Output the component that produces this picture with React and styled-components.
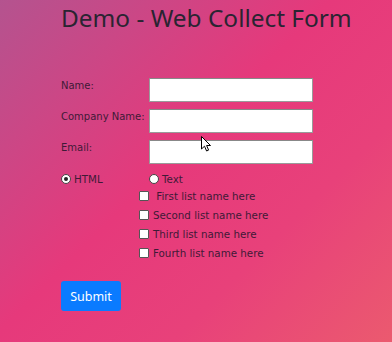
import styled, { createGlobalStyle } from "styled-components"

const GlobalStyle = createGlobalStyle`
  html, body {
    margin: 0;
    height: 100%;
  }
  body {
    background: linear-gradient(135deg, #b4538f 0%, #e6397b 45%, #e8417a 70%, #eb5a6f 100%);
    font-family: "DejaVu Sans", Verdana, sans-serif;
    overflow: hidden;
  }
  #root {
    height: 100%;
  }
`

const lists = [
  " First list name here",
  "Second list name here",
  "Third list name here",
  "Fourth list name here"
]

const Page = styled.div`
  position: relative;
  height: 100%;
  padding: 0 0 0 61px;
  box-sizing: border-box;
`

const Title = styled.h1`
  margin: 0;
  padding: 3px 0 0 0;
  font-family: "Noto Sans", "Open Sans", sans-serif;
  font-weight: 400;
  font-size: 24.4px;
  line-height: 30px;
  color: #2a2432;
`

const Form = styled.form`
  margin-top: 45px;
  display: flex;
  flex-direction: column;
`

const Row = styled.div`
  display: grid;
  grid-template-columns: 88px 164px;
  align-items: start;
  height: 31px;
`

const Label = styled.label`
  font-size: 10px;
  line-height: 14px;
  padding-top: 1px;
  color: #3f1a37;
  white-space: nowrap;
`

const Input = styled.input`
  box-sizing: border-box;
  width: 164px;
  height: 24px;
  margin: 0;
  border: 1px solid #9a9a9a;
  border-top-color: #888;
  background: #fff;
  outline: none;
`

const RadioRow = styled.div`
  display: grid;
  grid-template-columns: 88px auto;
  height: 15px;
  align-items: center;
`

const Option = styled.label`
  display: flex;
  align-items: center;
  gap: 3px;
  font-size: 10.3px;
  color: #3f1a37;
`

const Radio = styled.input.attrs({ type: "radio" })`
  appearance: none;
  box-sizing: border-box;
  width: 10px;
  height: 10px;
  margin: 0;
  border-radius: 50%;
  border: 1px solid #444;
  background: #fff;
  display: grid;
  place-items: center;
  &:checked::after {
    content: "";
    width: 4px;
    height: 4px;
    border-radius: 50%;
    background: #222;
  }
`

const Lists = styled.div`
  display: flex;
  flex-direction: column;
  padding-left: 78px;
`

const Check = styled.label`
  display: flex;
  align-items: center;
  gap: 4px;
  height: 19px;
  font-size: 10.3px;
  color: #3f1a37;
  white-space: pre;
`

const Box = styled.input.attrs({ type: "checkbox" })`
  appearance: none;
  box-sizing: border-box;
  width: 10px;
  height: 10px;
  margin: 0;
  border: 1px solid #555;
  border-radius: 1px;
  background: #fff;
`

const Submit = styled.button`
  align-self: flex-start;
  margin-top: 19px;
  width: 60px;
  height: 30px;
  border: none;
  border-radius: 3px;
  background: #0a7bff;
  color: #fff;
  font-family: "Noto Sans", "Open Sans", sans-serif;
  font-size: 12.5px;
  padding: 0;
`

const Cursor = styled.svg`
  position: absolute;
  left: 201px;
  top: 136px;
`

function App() {
  return (
    <>
      <GlobalStyle />
      <Page>
        <Title>Demo - Web Collect Form</Title>
        <Form onSubmit={(e) => e.preventDefault()}>
          <Row>
            <Label>Name:</Label>
            <Input />
          </Row>
          <Row>
            <Label>Company Name:</Label>
            <Input />
          </Row>
          <Row>
            <Label>Email:</Label>
            <Input />
          </Row>
          <RadioRow>
            <Option>
              <Radio name="fmt" defaultChecked />
              HTML
            </Option>
            <Option>
              <Radio name="fmt" />
              Text
            </Option>
          </RadioRow>
          <Lists>
            {lists.map((name, i) => (
              <Check key={i}>
                <Box />
                {name}
              </Check>
            ))}
          </Lists>
          <Submit type="submit">Submit</Submit>
        </Form>
        <Cursor width="12" height="17" viewBox="0 0 12 17">
          <path d="M0.5 0.5 L0.5 13 L3.5 10.2 L5.6 15 L7.6 14.1 L5.6 9.5 L9.5 9.5 Z" fill="#fff" stroke="#000" strokeWidth="1" strokeLinejoin="miter" />
        </Cursor>
      </Page>
    </>
  )
}

export default App
